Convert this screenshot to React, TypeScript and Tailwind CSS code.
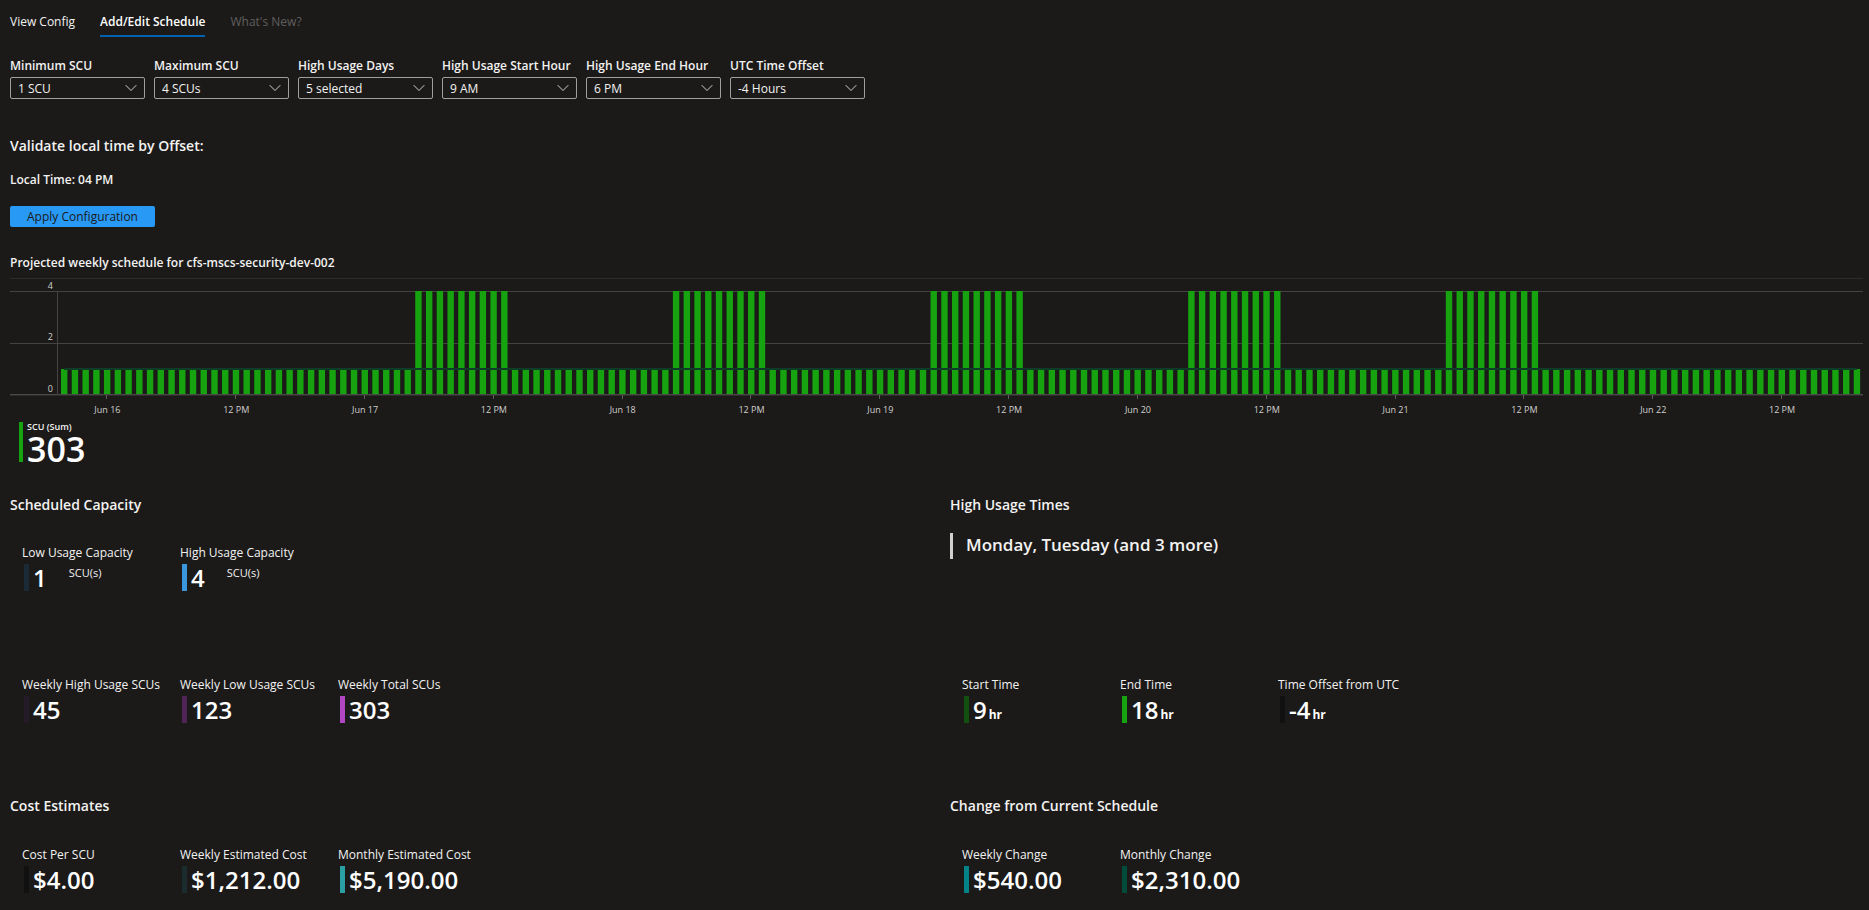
import React from "react";

type TileData = {
  label: string;
  value: string;
  bar: string;
  unit?: string;
  note?: string;
};

const filters = [
  { id: "min-scu", label: "Minimum SCU", value: "1 SCU" },
  { id: "max-scu", label: "Maximum SCU", value: "4 SCUs" },
  { id: "days", label: "High Usage Days", value: "5 selected" },
  { id: "start", label: "High Usage Start Hour", value: "9 AM" },
  { id: "end", label: "High Usage End Hour", value: "6 PM" },
  { id: "offset", label: "UTC Time Offset", value: "-4 Hours" },
];

const capacity: TileData[] = [
  { label: "Low Usage Capacity", value: "1", bar: "bg-[#1a2a37]", note: "SCU(s)" },
  { label: "High Usage Capacity", value: "4", bar: "bg-[#3a96dd]", note: "SCU(s)" },
];

const weekly: TileData[] = [
  { label: "Weekly High Usage SCUs", value: "45", bar: "bg-[#241a28]" },
  { label: "Weekly Low Usage SCUs", value: "123", bar: "bg-[#4e2556]" },
  { label: "Weekly Total SCUs", value: "303", bar: "bg-[#b146c2]" },
];

const times: TileData[] = [
  { label: "Start Time", value: "9", bar: "bg-[#11500f]", unit: "hr" },
  { label: "End Time", value: "18", bar: "bg-[#16a30f]", unit: "hr" },
  { label: "Time Offset from UTC", value: "-4", bar: "bg-[#111111]", unit: "hr" },
];

const costs: TileData[] = [
  { label: "Cost Per SCU", value: "$4.00", bar: "bg-[#111111]" },
  { label: "Weekly Estimated Cost", value: "$1,212.00", bar: "bg-[#1a2c2e]" },
  { label: "Monthly Estimated Cost", value: "$5,190.00", bar: "bg-[#2aa0a4]" },
];

const changes: TileData[] = [
  { label: "Weekly Change", value: "$540.00", bar: "bg-[#038387]" },
  { label: "Monthly Change", value: "$2,310.00", bar: "bg-[#004b3a]" },
];

function Filter({ id, label, value }: { id: string; label: string; value: string }) {
  return (
    <div className="w-[135px]">
      <label htmlFor={id} className="mb-[3px] block text-xs leading-4 font-semibold whitespace-nowrap">
        {label}
      </label>
      <div className="relative">
        <select
          id={id}
          className="block h-[22px] w-full appearance-none rounded-xs border border-[#a19f9d] bg-transparent pt-px pl-[7px] text-xs leading-4 text-[#f3f2f1]"
        >
          <option>{value}</option>
        </select>
        <svg
          className="pointer-events-none absolute top-[7px] right-2 h-[8px] w-[12px]"
          viewBox="0 0 12 8"
          fill="none"
          stroke="#d2d0ce"
          aria-hidden="true"
        >
          <path d="M0.7 1.2 6 6.5 11.3 1.2" />
        </svg>
      </div>
    </div>
  );
}

function Tile({ label, value, bar, unit, note }: TileData) {
  return (
    <div className="w-[158px]">
      <div className="text-xs leading-4 whitespace-nowrap">{label}</div>
      <div className="mt-[3px] ml-[2px] flex h-[27px]">
        <div className={`w-[5px] ${bar}`} />
        <div className="ml-1 text-2xl leading-[27px] font-semibold text-white">
          {value}
          {unit && <span className="ml-[2px] text-xs font-bold">{unit}</span>}
        </div>
        {note && <div className="ml-[22px] text-[11px] leading-[18px]">{note}</div>}
      </div>
    </div>
  );
}

function TileRow({ items }: { items: TileData[] }) {
  return (
    <div className="flex pl-3">
      {items.map((t) => (
        <Tile key={t.label} {...t} />
      ))}
    </div>
  );
}

const HOUR = 10.735;
const FIRST = 51;

function Chart() {
  const hours = Array.from({ length: 168 }, (_, i) => i);
  const isHigh = (i: number) => i >= 33 && i < 138 && (i - 33) % 24 < 9;
  const ticks = Array.from({ length: 14 }, (_, i) => ({
    x: 96.4 + i * 12 * HOUR,
    text: i % 2 ? "12 PM" : `Jun ${16 + i / 2}`,
  }));
  return (
    <svg
      viewBox="0 0 1853 138"
      className="block h-auto w-full"
      role="img"
      aria-label="Projected weekly SCU schedule"
    >
      <g shapeRendering="crispEdges">
        <rect x="0" y="0" width="1853" height="1" fill="#2d2c2b" />
        <rect x="0" y="13" width="1853" height="1" fill="#444342" />
        <rect x="0" y="65" width="1853" height="1" fill="#444342" />
        <rect x="0" y="116" width="1853" height="1" fill="#4a4948" />
        <rect x="0" y="117" width="1853" height="1" fill="#2d2c2b" />
        <rect x="47" y="13" width="1" height="104" fill="#444342" />
        {ticks.map((t) => (
          <rect key={t.x} x={Math.round(t.x)} y="117" width="1" height="4" fill="#605e5c" />
        ))}
      </g>
      {hours.map((i) => {
        const y = isHigh(i) ? 13 : 91;
        return <rect key={i} x={FIRST + i * HOUR} y={y} width="6.4" height={116 - y} fill="#16a30f" />;
      })}
      <rect x={FIRST + 3} y="90" width={HOUR * 167} height="2" fill="#0e3d27" />
      <g fill="#d2d0ce" fontSize="9">
        <g textAnchor="end">
          <text x="43" y="11">4</text>
          <text x="43" y="62">2</text>
          <text x="43" y="114">0</text>
        </g>
        <g textAnchor="middle">
          {ticks.map((t) => (
            <text key={t.x} x={t.x + 1} y="135">{t.text}</text>
          ))}
        </g>
      </g>
    </svg>
  );
}

function Heading({ children }: { children: React.ReactNode }) {
  return <h2 className="text-sm leading-5 font-semibold">{children}</h2>;
}

export default function App() {
  return (
    <main className="min-h-screen overflow-hidden bg-[#1b1a19] pt-[13px] pr-[6px] pb-4 pl-[10px] font-['Open_Sans','Noto_Sans',sans-serif] text-[#f3f2f1]">
      <nav className="flex gap-[25px] text-xs leading-[18px]">
        <a href="#view" className="pb-1">View Config</a>
        <a href="#schedule" aria-current="page" className="border-b-2 border-[#0063b1] pb-1 font-semibold text-white">
          Add/Edit Schedule
        </a>
        <a href="#new" className="pb-1 text-[#605e5c]">What's New?</a>
      </nav>

      <form className="mt-[21px] flex flex-wrap gap-[9px]">
        {filters.map((f) => (
          <Filter key={f.id} {...f} />
        ))}
      </form>

      <section className="mt-[37px]">
        <Heading>Validate local time by Offset:</Heading>
        <p className="mt-4 text-xs leading-4 font-semibold">Local Time: 04 PM</p>
        <button type="button" className="mt-[18px] block h-[21px] w-[145px] rounded-xs bg-[#2899f5] text-xs leading-4 text-[#1b1a19]">
          Apply Configuration
        </button>
      </section>

      <section className="mt-[27px]">
        <h3 className="mb-[6px] text-xs leading-[18px] font-semibold">
          Projected weekly schedule for cfs-mscs-security-dev-002
        </h3>
        <Chart />
        <div className="mt-[6px] ml-[9px] flex h-11">
          <div className="h-10 w-1 bg-[#16a30f]" />
          <div className="ml-1">
            <div className="text-[9px] leading-[10px] font-semibold">SCU (Sum)</div>
            <div className="text-[34px] leading-[34px] font-semibold text-white">303</div>
          </div>
        </div>
      </section>

      <div className="mt-[29px] grid grid-cols-2 gap-x-[27px]">
        <section>
          <Heading>Scheduled Capacity</Heading>
          <div className="mt-[30px]">
            <TileRow items={capacity} />
          </div>
        </section>
        <section>
          <Heading>High Usage Times</Heading>
          <p className="mt-[18px] border-l-3 border-[#d2d0ce] pb-[2px] pl-[13px] text-[17px] leading-6 font-semibold">
            Monday, Tuesday (and 3 more)
          </p>
        </section>
      </div>

      <div className="mt-[86px] grid grid-cols-2 gap-x-[27px]">
        <TileRow items={weekly} />
        <TileRow items={times} />
      </div>

      <div className="mt-[73px] grid grid-cols-2 gap-x-[27px]">
        <section>
          <Heading>Cost Estimates</Heading>
          <div className="mt-[31px]">
            <TileRow items={costs} />
          </div>
        </section>
        <section>
          <Heading>Change from Current Schedule</Heading>
          <div className="mt-[31px]">
            <TileRow items={changes} />
          </div>
        </section>
      </div>
    </main>
  );
}
